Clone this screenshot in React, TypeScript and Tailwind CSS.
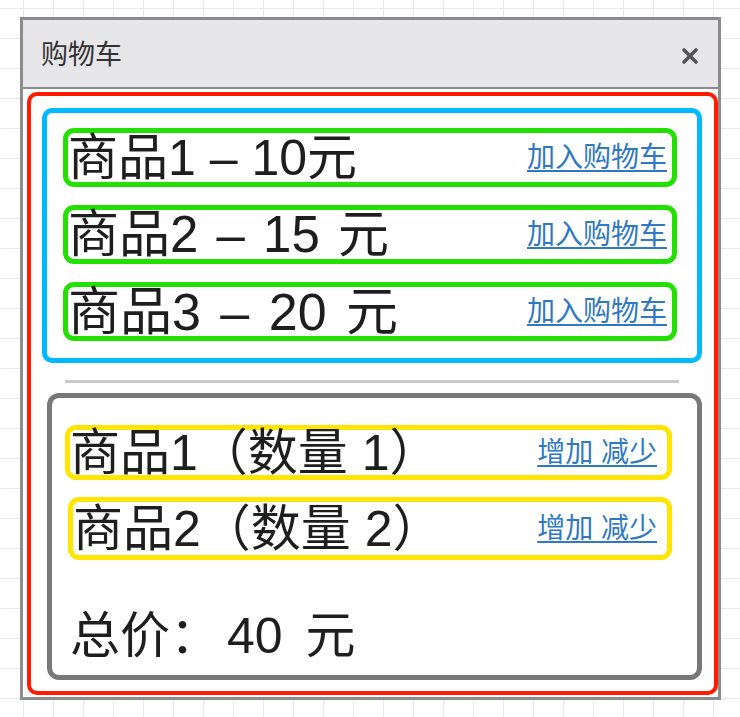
import { X } from 'lucide-react'

const products = [
  { name: '商品1 – 10元', text: 'text-[50px]' },
  { name: '商品2 – 15 元', text: 'text-[51px] [word-spacing:4px]' },
  { name: '商品3 – 20 元', text: 'text-[52px] [word-spacing:5px]' },
]

const cartItems = [
  { name: '商品1（数量 1）', box: 'h-[55px] ml-0' },
  { name: '商品2（数量 2）', box: 'h-[63px] ml-[3px]' },
]

const font = "font-['Liberation_Sans','Noto_Sans_CJK_SC',sans-serif]"

export default function App() {
  return (
    <div
      className={`${font} w-[740px] h-[717px] bg-white pl-[20px] pt-[17px]
        bg-[linear-gradient(to_right,#e9e9e9_1px,transparent_1px),linear-gradient(to_bottom,#e9e9e9_1px,transparent_1px)]
        [background-size:30px_30px] [background-position:23px_8px]`}
    >
      {/* window */}
      <div className="w-[701px] h-[683px] border-[3px] border-[#8c8c8c] bg-white flex flex-col">
        {/* title bar */}
        <div className="h-[69px] shrink-0 bg-[#e7e6e9] border-b-2 border-[#8c8c8c] flex items-center justify-between pt-[4px] pl-[18px] pr-[16px]">
          <span className="text-[27px] leading-none text-[#333]">购物车</span>
          <button className="text-[#555] w-[24px] h-[24px] flex items-center justify-center" aria-label="close">
            <X size={24} strokeWidth={3.6} />
          </button>
        </div>

        {/* body */}
        <div className="flex-1 pt-[3px] pl-[4px] pb-[2px]">
          <div className="h-full border-4 border-[#ff1a00] rounded-[10px] pt-[12px] pl-[11px] pr-[12px] pb-[11px] flex flex-col">
            {/* product list */}
            <div className="border-[5px] border-[#00b9ff] rounded-[10px] pt-[15px] pb-[17px] pl-[16px] pr-[20px] flex flex-col gap-[18px]">
              {products.map((p) => (
                <div
                  key={p.name}
                  className="h-[59px] border-[5px] border-[#22e000] rounded-[11px] flex items-center justify-between pr-[5px]"
                >
                  <span className={`${p.text} leading-none text-[#1e1e1e] whitespace-pre`}>{p.name}</span>
                  <a href="#" className="text-[28px] leading-none text-[#2f78c4] underline underline-offset-[3px]">
                    加入购物车
                  </a>
                </div>
              ))}
            </div>

            <div className="mt-[17px] mx-[23px] h-[3px] bg-[#c9c9c9] shrink-0" />

            {/* cart */}
            <div className="mt-[10px] ml-[5px] flex-1 border-[5px] border-[#787878] rounded-[12px] pt-[27px] pl-[13px] pr-[25px] pb-[14px] flex flex-col">
              <div className="flex flex-col gap-[17px]">
                {cartItems.map((c) => (
                  <div
                    key={c.name}
                    className={`${c.box} border-[5px] border-[#ffe500] rounded-[11px] flex items-center justify-between pr-[10px]`}
                  >
                    <span className="text-[50px] leading-none text-[#1e1e1e] whitespace-pre">{c.name}</span>
                    <a href="#" className="text-[28px] leading-none text-[#2f78c4] underline underline-offset-[3px] whitespace-pre">
                      增加 减少
                    </a>
                  </div>
                ))}
              </div>
              <div className="mt-auto pl-[5px] text-[50px] leading-none text-[#1e1e1e] whitespace-pre">
                总价：<span className="ml-[7px] [word-spacing:9px]">40 元</span>
              </div>
            </div>
          </div>
        </div>
      </div>
    </div>
  )
}
